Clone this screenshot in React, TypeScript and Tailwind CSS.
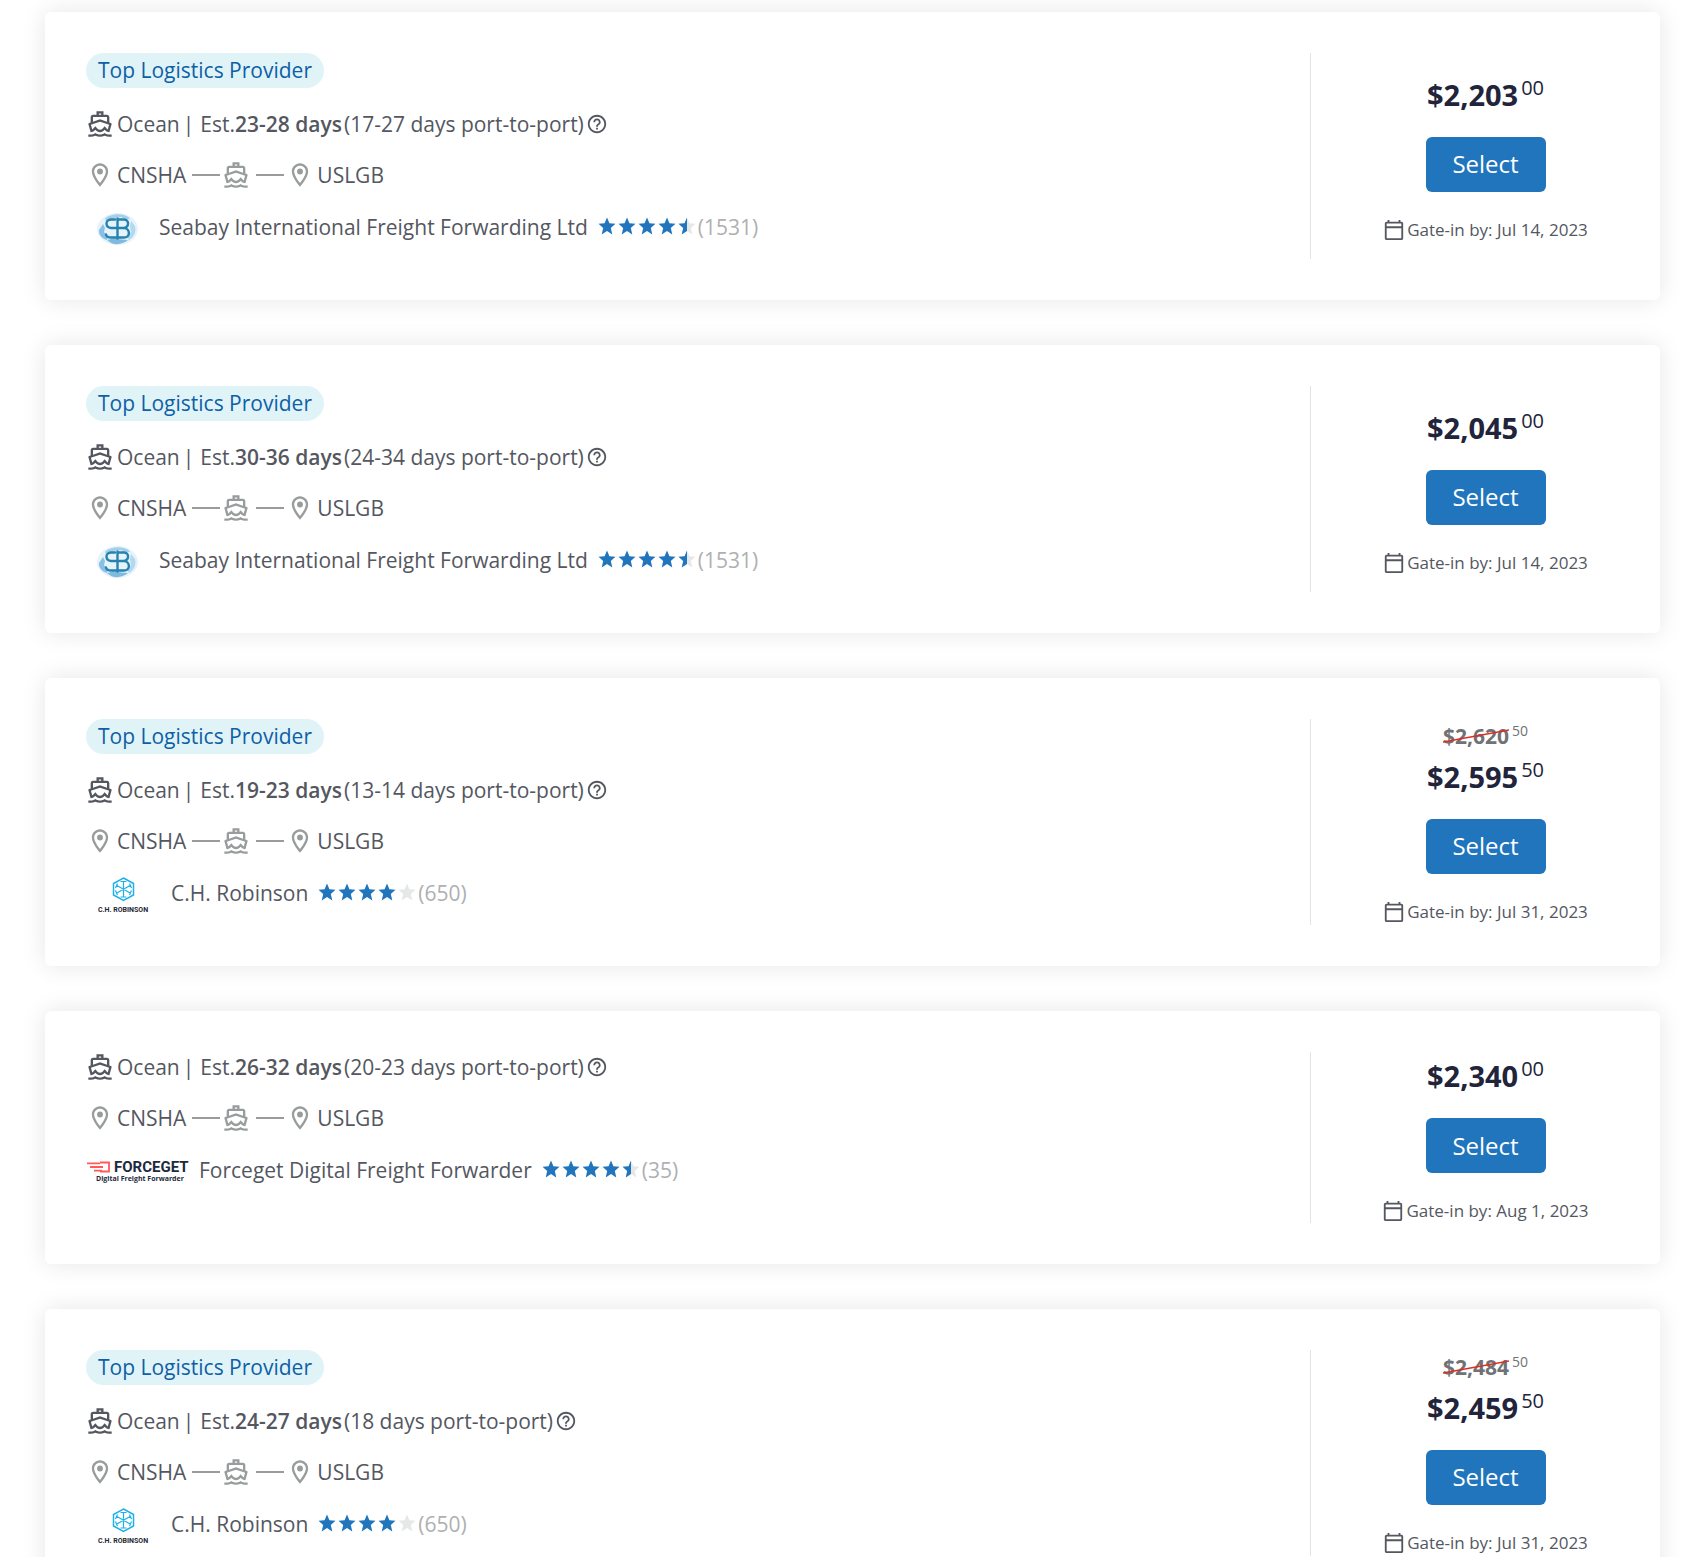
import { MdHelpOutline, MdOutlineCalendarToday, MdOutlineDirectionsBoat, MdOutlineLocationOn } from "react-icons/md";

type Provider = {
  name: string;
  logo: "seabay" | "robinson" | "forceget";
  rating: number;
  reviews: number;
};

type Quote = {
  id: number;
  top: boolean;
  days: string;
  portDays: string;
  provider: Provider;
  oldPrice?: [string, string];
  price: [string, string];
  gateIn: string;
};

const seabay: Provider = {
  name: "Seabay International Freight Forwarding Ltd",
  logo: "seabay",
  rating: 4.5,
  reviews: 1531,
};
const robinson: Provider = { name: "C.H. Robinson", logo: "robinson", rating: 4, reviews: 650 };
const forceget: Provider = {
  name: "Forceget Digital Freight Forwarder",
  logo: "forceget",
  rating: 4.5,
  reviews: 35,
};

const quotes: Quote[] = [
  { id: 1, top: true, days: "23-28 days", portDays: "17-27 days", provider: seabay, price: ["$2,203", "00"], gateIn: "Jul 14, 2023" },
  { id: 2, top: true, days: "30-36 days", portDays: "24-34 days", provider: seabay, price: ["$2,045", "00"], gateIn: "Jul 14, 2023" },
  { id: 3, top: true, days: "19-23 days", portDays: "13-14 days", provider: robinson, oldPrice: ["$2,620", "50"], price: ["$2,595", "50"], gateIn: "Jul 31, 2023" },
  { id: 4, top: false, days: "26-32 days", portDays: "20-23 days", provider: forceget, price: ["$2,340", "00"], gateIn: "Aug 1, 2023" },
  { id: 5, top: true, days: "24-27 days", portDays: "18 days", provider: robinson, oldPrice: ["$2,484", "50"], price: ["$2,459", "50"], gateIn: "Jul 31, 2023" },
];

function SeabayLogo() {
  return (
    <svg className="ml-[10px] h-9 w-[42px]" viewBox="0 -4 42 36" fill="none">
      <ellipse cx="21.5" cy="16" rx="20.5" ry="16" fill="#e6f3fb" />
      <path d="M9 5.500C14 .5 28-1 34 5.500l-4 1.500-5-3-7 1-4 3-4 .5z" fill="#a3cfeb" />
      <path d="M3 17l4-6 2 4-1 4 4 5-1 3C7 26 2 22 3 17z" fill="#8ac0e4" />
      <path d="M35 8l4 5c1.500 6-1 11-6 14l-2-3 4-5-1-6z" fill="#b3d8ef" />
      <path d="M11 27l6-1.500 9 1 6 .5c-6 5-15 6-21 0z" fill="#7fbae0" />
      <path
        d="M19 6.500h-4c-6 0-6 8 0 8.500h13c6.500.5 6.500 9.500 0 9.500H15c-3 0-4.500-1-5-3M21.500 5.500v20M21.500 6.500H28c5.500 0 5.500 8-.5 8.500"
        stroke="#2583ad"
        strokeWidth="2.400"
        strokeLinecap="round"
      />
    </svg>
  );
}

function RobinsonLogo() {
  return (
    <svg className="ml-[10px] h-10 w-[54px]" viewBox="0 -4 54 40" fill="none">
      <path d="M27.500 1l10 5.500v11.500l-10 5.500-10-5.500V6.500z" stroke="#1fb0e8" strokeWidth="1.500" />
      <path
        d="M27.500 4.500v15.500M20.500 8.300l14 8M34.500 8.300l-14 8M24.500 4.500h6M24.500 20h6M19.500 11l2-4.500M35.500 11l-2-4.500M19.500 13.500l2 4.500M35.500 13.500l-2 4.500"
        stroke="#1fb0e8"
        strokeWidth="1.200"
      />
      <text x="27" y="35" textAnchor="middle" fontSize="7" fontWeight="700" fill="#1d2733" fontFamily="Roboto, sans-serif">
        C.H. ROBINSON
      </text>
    </svg>
  );
}

function ForcegetLogo() {
  return (
    <svg className="h-7 w-[103px]" viewBox="0 0 103 28" fill="none">
      <path d="M1 7.300h13M4 11h13M8 14.700h8M14 6.500h9v9h-9" stroke="#ff5a5a" strokeWidth="1.800" />
      <text x="28" y="16" fontSize="15" fontWeight="700" fill="#1d2a3d" fontFamily="Roboto, sans-serif">
        FORCEGET
      </text>
      <text x="10" y="25" fontSize="7" fontWeight="700" fill="#1d2a3d" fontFamily="Open Sans, sans-serif">
        Digital Freight Forwarder
      </text>
    </svg>
  );
}

function ProviderLogo({ logo }: { logo: Provider["logo"] }) {
  if (logo === "seabay") {
    return (
      <div className="w-[73px]">
        <SeabayLogo />
      </div>
    );
  }
  if (logo === "robinson") {
    return (
      <div className="w-[85px]">
        <RobinsonLogo />
      </div>
    );
  }
  return (
    <div className="w-[113px]">
      <ForcegetLogo />
    </div>
  );
}

const STAR = "M8 0l2.300 5.500 5.700.4-4.400 3.900L13 16 8 12.700 3 16l1.400-6.200L0 5.900l5.700-.4z";

function Stars({ rating }: { rating: number }) {
  return (
    <div className="mr-0.5 flex gap-0.5 pb-0.5" role="img" aria-label={`${rating} out of 5 stars`}>
      {[0, 1, 2, 3, 4].map((i) => (
        <svg key={i} className="h-[18px] w-[18px]" viewBox="-0.500 -0.500 17 17">
          <path d={STAR} fill={rating >= i + 1 ? "#2075bd" : "#e6e7e7"} />
          {rating === i + 0.5 && (
            <path d="M8 0v12.700L3 16l1.400-6.200L0 5.900l5.700-.4z" fill="#2075bd" />
          )}
        </svg>
      ))}
    </div>
  );
}

function QuoteCard({ quote }: { quote: Quote }) {
  const { provider } = quote;
  return (
    <article className="flex rounded-md bg-white py-[41px] pl-[41px] shadow-[0_0_25px_rgba(0,0,0,0.1)]">
      <div className="flex flex-1 flex-col items-start gap-[21px] pb-4">
        {quote.top && (
          <span className="flex h-[35px] items-center rounded-full bg-[#e0f4f8] px-3 pb-0.5 text-[#0f5fa6]">
            Top Logistics Provider
          </span>
        )}
        <div className="flex h-[30px] items-center">
          <MdOutlineDirectionsBoat className="mr-[3px] h-7 w-7" />
          <span>Ocean</span>
          <span className="mr-1.5 ml-[3px]">|</span>
          <span>Est.</span>
          <strong className="font-semibold">{quote.days}</strong>
          <span className="ml-0.5">({quote.portDays} port-to-port)</span>
          <button type="button" aria-label="About transit time" className="ml-0.5">
            <MdHelpOutline className="h-[22px] w-[22px]" />
          </button>
        </div>
        <div className="flex h-[30px] items-center">
          <MdOutlineLocationOn className="mr-[3px] h-7 w-7 text-[#999c9c]" />
          <span>CNSHA</span>
          <span className="mr-0.5 ml-1.5 h-0.5 w-7 bg-[#999c9c]" />
          <MdOutlineDirectionsBoat className="h-7 w-7 text-[#999c9c]" />
          <span className="mr-0.5 ml-1.5 h-0.5 w-7 bg-[#999c9c]" />
          <MdOutlineLocationOn className="mr-[3px] h-7 w-7 text-[#999c9c]" />
          <span>USLGB</span>
        </div>
        <div className="flex h-8 items-center">
          <ProviderLogo logo={provider.logo} />
          <span className="mr-2.5">{provider.name}</span>
          <Stars rating={provider.rating} />
          <span className="text-[#aeb0b2]">({provider.reviews})</span>
        </div>
      </div>
      <div className="flex w-[350px] flex-col items-center justify-center border-l border-[#e3e3e3]">
        {quote.oldPrice && (
          <div className="flex h-8 items-start gap-[3px] text-[#6f7375]">
            <span className="relative font-bold">
              {quote.oldPrice[0]}
              <svg className="absolute inset-0 h-full w-full" viewBox="0 0 66 30" preserveAspectRatio="none">
                <path d="M0 21L66 9" stroke="#dd2e26" strokeWidth="1.500" />
              </svg>
            </span>
            <span className="text-[14px] leading-5">{quote.oldPrice[1]}</span>
          </div>
        )}
        <div className="flex h-[66px] items-start gap-[3px] text-[#21243a]">
          <span className="pt-1 text-[29px] leading-[40px] font-bold">{quote.price[0]}</span>
          <span className="text-[20px] leading-[34px]">{quote.price[1]}</span>
        </div>
        <button type="button" className="h-[55px] w-[120px] rounded-md bg-[#2075bd] text-[24px] text-white">
          Select
        </button>
        <div className="mt-[26px] flex h-6 items-center gap-0.5 text-[17px]">
          <MdOutlineCalendarToday className="h-[22px] w-[22px]" />
          <span>Gate-in by: {quote.gateIn}</span>
        </div>
      </div>
    </article>
  );
}

export default function App() {
  return (
    <main className="flex flex-col gap-[45px] bg-white pt-3 pr-[29px] pb-[45px] pl-[45px] font-['Open_Sans',sans-serif] text-[21px] leading-[30px] text-[#54575f]">
      {quotes.map((quote) => (
        <QuoteCard key={quote.id} quote={quote} />
      ))}
    </main>
  );
}
